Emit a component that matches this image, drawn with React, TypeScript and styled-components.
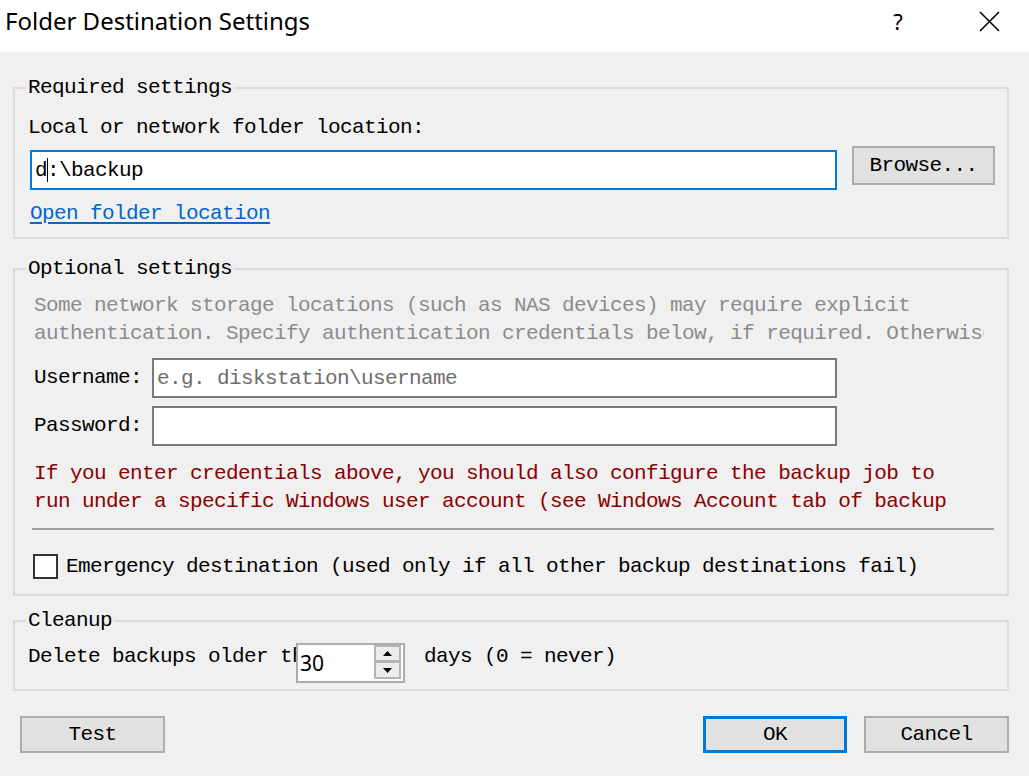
import React from "react";
import styled, { createGlobalStyle } from "styled-components";

const Global = createGlobalStyle`
  html, body { margin: 0; padding: 0; background: #f0f0f0; }
  * { box-sizing: border-box; }
`;

const Dialog = styled.div`
  width: 1029px;
  height: 776px;
  background: #f0f0f0;
  display: flex;
  flex-direction: column;
  overflow: hidden;
  font-family: "Liberation Mono", "DejaVu Sans Mono", monospace;
  font-size: 21px;
  letter-spacing: -0.6px;
  color: #000;
`;

const TitleBar = styled.div`
  height: 52px;
  flex: none;
  background: #fff;
  display: flex;
  align-items: flex-start;
  padding: 5px 10px 0 5px;
  gap: 31px;
`;

const Title = styled.div`
  flex: 1;
  font-family: "Noto Sans", "Open Sans", sans-serif;
  font-size: 24px;
  line-height: 32px;
  letter-spacing: 0;
`;

const TitleButton = styled.div`
  width: 60px;
  height: 32px;
  display: flex;
  align-items: center;
  justify-content: center;
  font-family: "Noto Sans", sans-serif;
  font-size: 22px;
  letter-spacing: 0;
`;

const Body = styled.div`
  flex: 1;
  display: flex;
  flex-direction: column;
  padding: 26px 20px 0 13px;
`;

const Group = styled.fieldset<{ $mt: number; $pb: number }>`
  margin: ${(p) => p.$mt}px 0 0 0;
  padding: 0 0 ${(p) => p.$pb}px 0;
  border: 2px solid #dcdcdc;
  min-width: 0;
  display: flex;
  flex-direction: column;
  align-items: flex-start;
`;

const Legend = styled.legend`
  margin-left: 11px;
  padding: 0 2px;
  line-height: 20px;
  height: 20px;
`;

const Line = styled.div<{ $mt: number; $ml: number }>`
  margin: ${(p) => p.$mt}px 0 0 ${(p) => p.$ml}px;
  line-height: 24px;
  height: 24px;
  white-space: nowrap;
`;

const Para = styled.div<{ $mt: number; $color: string; $w: number; $wrap?: boolean }>`
  margin: ${(p) => p.$mt}px 0 0 19px;
  width: ${(p) => p.$w}px;
  height: 56px;
  overflow: hidden;
  line-height: 28px;
  color: ${(p) => p.$color};
  white-space: ${(p) => (p.$wrap ? "normal" : "nowrap")};
`;

const Row = styled.div<{ $mt: number; $ml: number; $top?: boolean }>`
  display: flex;
  align-items: ${(p) => (p.$top ? "flex-start" : "center")};
  margin: ${(p) => p.$mt}px 0 0 ${(p) => p.$ml}px;
`;

const PathRow = styled.div`
  display: flex;
  align-items: flex-start;
  margin: 6px 0 0 15px;
`;

const TextBox = styled.div<{ $w: number; $focus?: boolean; $mt?: number }>`
  width: ${(p) => p.$w}px;
  height: 40px;
  margin-top: ${(p) => p.$mt ?? 0}px;
  background: #fff;
  border: 2px solid ${(p) => (p.$focus ? "#0078d7" : "#7a7a7a")};
  display: flex;
  align-items: center;
  padding-left: 3px;
  white-space: nowrap;
  overflow: hidden;
`;

const Placeholder = styled.span`
  color: #6d6d6d;
`;

const Caret = styled.span`
  display: inline-block;
  width: 0;
  height: 24px;
  border-left: 1px solid #000;
  vertical-align: middle;
  margin-right: -1px;
`;

const Button = styled.div<{ $w: number; $default?: boolean; $ml?: number }>`
  width: ${(p) => p.$w}px;
  height: 37px;
  margin-left: ${(p) => p.$ml ?? 0}px;
  background: #e1e1e1;
  border: ${(p) => (p.$default ? "3px solid #0078d7" : "2px solid #adadad")};
  display: flex;
  align-items: center;
  justify-content: center;
  white-space: nowrap;
  flex: none;
`;

const BrowseButton = styled(Button)`
  height: 39px;
`;

const Link = styled.div`
  margin: 12px 0 0 15px;
  line-height: 24px;
  color: #0066cc;
  text-decoration: underline;
  text-underline-offset: 3px;
`;

const FieldLabel = styled.div`
  width: 118px;
  line-height: 24px;
`;

const Separator = styled.div`
  margin: 12px 0 0 17px;
  width: 962px;
  height: 2px;
  background: #a0a0a0;
`;

const CheckBox = styled.div`
  width: 25px;
  height: 25px;
  border: 2px solid #333;
  background: #fff;
  margin-right: 8px;
`;

const ClippedLabel = styled.div`
  width: 268px;
  margin-top: 2px;
  overflow: hidden;
  white-space: nowrap;
  line-height: 24px;
`;

const Spin = styled.div`
  width: 109px;
  height: 40px;
  border: 2px solid #adadad;
  background: #fff;
  display: flex;
  align-items: flex-start;
`;

const SpinValue = styled.div`
  flex: 1;
  height: 36px;
  display: flex;
  align-items: center;
  padding-left: 2px;
  font-family: "Noto Sans", "Liberation Sans", sans-serif;
  font-size: 21px;
  letter-spacing: 0;
`;

const SpinButtons = styled.div`
  width: 27px;
  margin-right: 2px;
  display: flex;
  flex-direction: column;
`;

const SpinButton = styled.div`
  height: 17px;
  background: #ececec;
  border: 2px solid #b4b4b4;
  display: flex;
  align-items: center;
  justify-content: center;
  & + & { border-top-width: 1px; }
`;

const Suffix = styled.div`
  margin: 2px 0 0 19px;
  line-height: 24px;
  white-space: nowrap;
`;

const Footer = styled.div`
  display: flex;
  align-items: center;
  margin: 25px 0 0 7px;
`;

const Spacer = styled.div`
  flex: 1;
`;

const Tri = ({ up }: { up?: boolean }) => (
  <svg width="9" height="5" viewBox="0 0 9 5">
    <polygon points={up ? "4.5,0 9,5 0,5" : "0,0 9,0 4.5,5"} fill="#000" />
  </svg>
);

export default function App() {
  return (
    <>
      <Global />
      <Dialog>
        <TitleBar>
          <Title>Folder Destination Settings</Title>
          <TitleButton>?</TitleButton>
          <TitleButton>
            <svg width="21" height="21" viewBox="0 0 21 21">
              <path d="M1 1 L20 20 M20 1 L1 20" stroke="#000" strokeWidth="1.6" fill="none" />
            </svg>
          </TitleButton>
        </TitleBar>
        <Body>
          <Group $mt={0} $pb={11}>
            <Legend>Required settings</Legend>
            <Line $mt={18} $ml={13}>Local or network folder location:</Line>
            <PathRow>
              <TextBox $w={807} $focus $mt={4}>
                d<Caret />:\backup
              </TextBox>
              <BrowseButton $w={143} $ml={15}>Browse...</BrowseButton>
            </PathRow>
            <Link>Open folder location</Link>
          </Group>

          <Group $mt={20} $pb={15}>
            <Legend>Optional settings</Legend>
            <Para $mt={13} $color="#8c8c8c" $w={950}>
              <div>Some network storage locations (such as NAS devices) may require explicit</div>
              <div>authentication. Specify authentication credentials below, if required. Otherwise leave blank.</div>
            </Para>
            <Row $mt={10} $ml={19}>
              <FieldLabel>Username:</FieldLabel>
              <TextBox $w={685}>
                <Placeholder>e.g. diskstation\username</Placeholder>
              </TextBox>
            </Row>
            <Row $mt={8} $ml={19}>
              <FieldLabel>Password:</FieldLabel>
              <TextBox $w={685} />
            </Row>
            <Para $mt={14} $color="#8b0000" $w={940} $wrap>
              If you enter credentials above, you should also configure the backup job to run under a
              specific Windows user account (see Windows Account tab of backup job settings).
            </Para>
            <Separator />
            <Row $mt={24} $ml={18}>
              <CheckBox />
              <Line $mt={0} $ml={0}>Emergency destination (used only if all other backup destinations fail)</Line>
            </Row>
          </Group>

          <Group $mt={15} $pb={6}>
            <Legend>Cleanup</Legend>
            <Row $mt={12} $ml={13} $top>
              <ClippedLabel>Delete backups older than</ClippedLabel>
              <Spin>
                <SpinValue>30</SpinValue>
                <SpinButtons>
                  <SpinButton><Tri up /></SpinButton>
                  <SpinButton><Tri /></SpinButton>
                </SpinButtons>
              </Spin>
              <Suffix>days (0 = never)</Suffix>
            </Row>
          </Group>

          <Footer>
            <Button $w={145}>Test</Button>
            <Spacer />
            <Button $w={144} $default>OK</Button>
            <Button $w={145} $ml={17}>Cancel</Button>
          </Footer>
        </Body>
      </Dialog>
    </>
  );
}
